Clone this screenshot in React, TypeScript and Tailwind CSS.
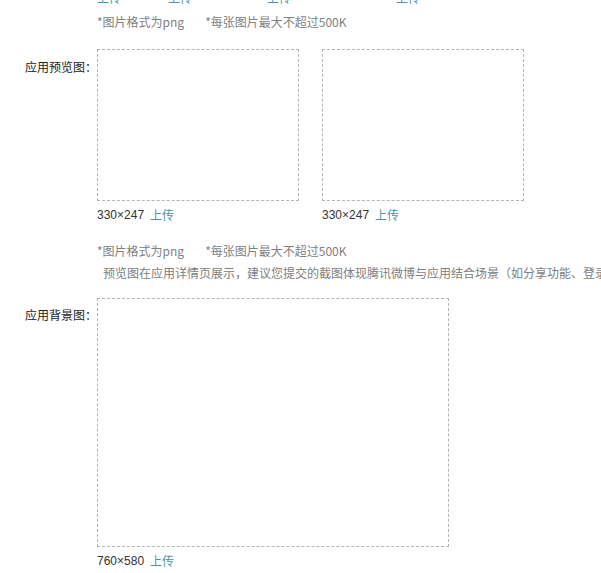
import React from 'react';

const font = { fontFamily: '"Noto Sans CJK SC", "Liberation Sans", sans-serif' };

function UploadLink() {
  return <a className="text-[#4a93ad] cursor-pointer">上传</a>;
}

function Hint() {
  return (
    <div className="flex h-[22px] items-center text-[#808080]">
      <span>*图片格式为png</span>
      <span className="ml-[21px]">*每张图片最大不超过500K</span>
    </div>
  );
}

function ImageBox({ w, h, size }: { w: string; h: string; size: string }) {
  return (
    <div className="flex flex-col">
      <div className={`${w} ${h} border border-dashed border-[#b5b5b5]`} />
      <div className="mt-[5px] flex h-[18px] items-center gap-[6px] text-[#333]">
        <span className="font-['Liberation_Sans',sans-serif]">{size}</span>
        <UploadLink />
      </div>
    </div>
  );
}

export default function App() {
  return (
    <div className="w-[601px] h-[573px] overflow-hidden bg-white text-[12px] leading-[18px]" style={font}>
      <div className="-mt-[13px] flex h-[22px] items-center pl-[97px]">
        <span className="w-[71px]"><UploadLink /></span>
        <span className="w-[99px]"><UploadLink /></span>
        <span className="w-[129px]"><UploadLink /></span>
        <UploadLink />
      </div>
      <div className="pl-[97px] mt-[2px]">
        <Hint />
      </div>

      <div className="mt-[16px] flex">
        <div className="w-[97px] pl-[25px] pt-[9px] text-[#222]">应用预览图：</div>
        <div className="flex gap-[23px]">
          <ImageBox w="w-[202px]" h="h-[152px]" size="330×247" />
          <ImageBox w="w-[202px]" h="h-[152px]" size="330×247" />
        </div>
      </div>

      <div className="pl-[97px] mt-[16px]">
        <Hint />
        <div className="flex h-[22px] items-center whitespace-nowrap text-[#808080] pl-[6px]">
          预览图在应用详情页展示，建议您提交的截图体现腾讯微博与应用结合场景（如分享功能、登录功能等）
        </div>
      </div>

      <div className="mt-[14px] flex">
        <div className="w-[97px] pl-[25px] pt-[8px] text-[#222]">应用背景图：</div>
        <ImageBox w="w-[352px]" h="h-[249px]" size="760×580" />
      </div>
    </div>
  );
}
